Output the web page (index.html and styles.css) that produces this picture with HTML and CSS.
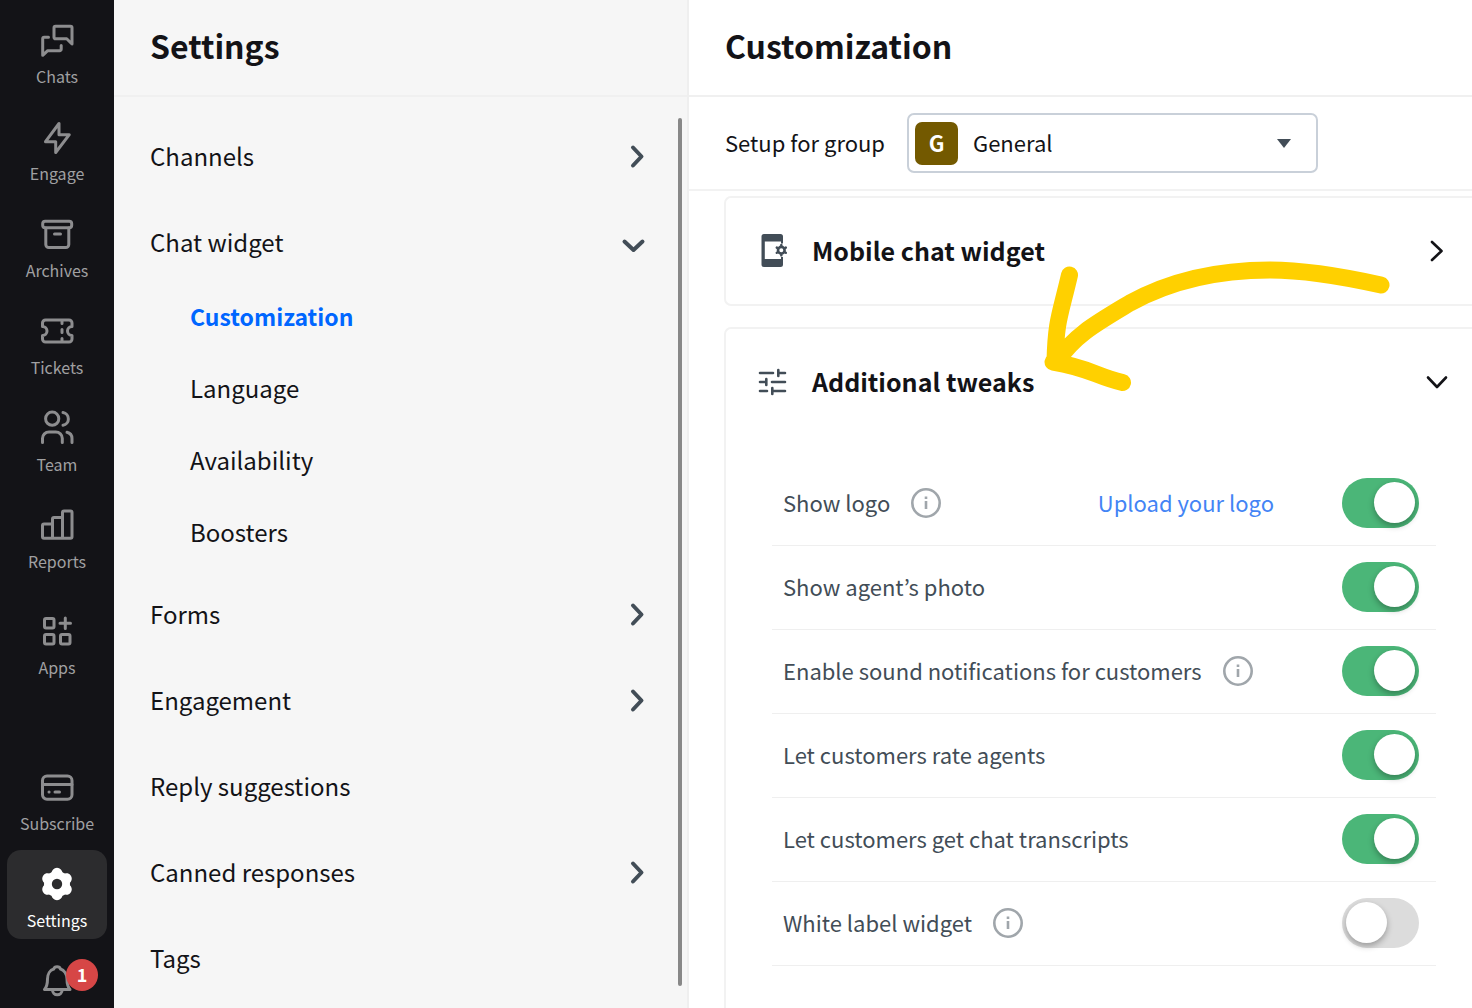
FILE: index.html
```html
<!DOCTYPE html>
<html lang="en">
<head>
    <meta charset="UTF-8">
    <meta name="viewport" content="width=device-width, initial-scale=1.0">
    <title>Settings - Customization</title>
    <link rel="stylesheet" href="styles.css">
</head>
<body>
    <nav class="rail">
        <a href="#" class="rail-item">
            <svg class="icon" viewBox="0 -1 36 36"><path d="M16.5 3.3h15a1.5 1.5 0 0 1 1.5 1.5V21l-5.3-5.2H16.5a1.5 1.5 0 0 1-1.5-1.5V4.8a1.5 1.5 0 0 1 1.500-1.500zM9.500 14.300H5.200a1.500 1.500 0 0 0-1.500 1.500V32.300l5-4.600h12a1.500 1.500 0 0 0 1.500-1.500V22.500"/></svg>
            <span>Chats</span>
        </a>
        <a href="#" class="rail-item">
            <svg class="icon" viewBox="0 -1 36 36"><path d="M20 3.500V14.700H30.300L16.700 32.500V21.700H6.500Z"/></svg>
            <span>Engage</span>
        </a>
        <a href="#" class="rail-item">
            <svg class="icon" viewBox="0 0 36 36"><rect x="3.700" y="5.300" width="29" height="6.500" rx="2.500"/><path d="M6.800 12v16.500a3 3 0 0 0 3 3h17a3 3 0 0 0 3-3V12M15.500 18h6"/></svg>
            <span>Archives</span>
        </a>
        <a href="#" class="rail-item">
            <svg class="icon" viewBox="0 0 36 36"><path d="M6.500 7h23.500a3 3 0 0 1 3 3v3.500a4.500 4.500 0 0 0 0 9V26a3 3 0 0 1-3 3H6.500a3 3 0 0 1-3-3v-3.500a4.500 4.500 0 0 0 0-9V10a3 3 0 0 1 3-3zM23 8v2.500M23 16.500v3M23 25.500v2.500"/></svg>
            <span>Tickets</span>
        </a>
        <a href="#" class="rail-item">
            <svg class="icon" viewBox="0 0 36 36"><circle cx="13.200" cy="8.700" r="6.600"/><path d="M24 2.500a6.500 6.500 0 0 1 0 12.800M3.500 32.500v-4a6.500 6.500 0 0 1 6.500-6.500h6.800a6.500 6.500 0 0 1 6.500 6.500v4M28 22.300a6.500 6.500 0 0 1 5 6.200v4"/></svg>
            <span>Team</span>
        </a>
        <a href="#" class="rail-item">
            <svg class="icon" viewBox="0 0 36 36"><path d="M5 31.300a1.500 1.500 0 0 1-1.500-1.500V18.500A1.500 1.500 0 0 1 5 17h8.500v-5a1.500 1.500 0 0 1 1.500-1.500h8.500V5.500A1.500 1.500 0 0 1 25 4h6.500A1.500 1.500 0 0 1 33 5.500v24.300a1.500 1.500 0 0 1-1.500 1.500zM13.500 17v14M23.500 10.500v20.500"/></svg>
            <span>Reports</span>
        </a>
        <a href="#" class="rail-item rail-apps">
            <svg class="icon" viewBox="0 0 36 36"><rect x="5.500" y="5.500" width="9.500" height="9.500" rx="1.500"/><rect x="5.500" y="21.500" width="9.500" height="9.500" rx="1.500"/><rect x="21.500" y="21.500" width="9.500" height="9.500" rx="1.500"/><path d="M26.300 5v10.500M21 10.200h10.500"/></svg>
            <span>Apps</span>
        </a>
        <a href="#" class="rail-item rail-subscribe">
            <svg class="icon" viewBox="0 0 36 36"><rect x="3.500" y="7" width="29.500" height="23.200" rx="4.500"/><path d="M3.500 15.500H33M10 23h.1M16 23h4.500"/></svg>
            <span>Subscribe</span>
        </a>
        <a href="#" class="rail-item active">
            <svg class="icon gear" viewBox="0 0 36 36"><circle class="gear-body" cx="18" cy="18" r="13"/><path d="M18 7.300v21.400M8.700 12.650l18.600 10.700M8.700 23.350l18.600-10.700"/><circle cx="18" cy="18" r="5.200"/></svg>
            <span>Settings</span>
        </a>
        <a href="#" class="rail-item" aria-label="Notifications">
            <svg class="icon" viewBox="0 0 36 36"><path d="M5.500 26.500h25.500c-2.500-3-3-6-3-10.500 0-5-3-9-6.500-10a3.500 3 0 0 0-6.800 0c-3.500 1-6.200 5-6.200 10 0 4.500-.5 7.500-3 10.500zM13.500 27a4.800 4.800 0 0 0 9.600 0"/></svg>
            <b class="count">1</b>
        </a>
    </nav>

    <aside class="panel">
        <h1 class="title">Settings</h1>
        <ul class="menu">
            <li><a href="#">Channels <svg class="icon" viewBox="0 0 36 36"><path d="M14 9.500l8.500 9-8.500 9"/></svg></a></li>
            <li>
                <a href="#">Chat widget <svg class="icon" viewBox="0 0 36 36"><path d="M5.500 17.500l9 8.500 9-8.500"/></svg></a>
                <ul class="submenu">
                    <li><a href="#" class="current">Customization</a></li>
                    <li><a href="#">Language</a></li>
                    <li><a href="#">Availability</a></li>
                    <li><a href="#">Boosters</a></li>
                </ul>
            </li>
            <li><a href="#">Forms <svg class="icon" viewBox="0 0 36 36"><path d="M14 9.500l8.500 9-8.500 9"/></svg></a></li>
            <li><a href="#">Engagement <svg class="icon" viewBox="0 0 36 36"><path d="M14 9.500l8.500 9-8.500 9"/></svg></a></li>
            <li><a href="#">Reply suggestions</a></li>
            <li><a href="#">Canned responses <svg class="icon" viewBox="0 0 36 36"><path d="M14 9.500l8.500 9-8.500 9"/></svg></a></li>
            <li><a href="#">Tags</a></li>
        </ul>
        <div class="scroll-thumb"></div>
    </aside>

    <main class="content">
        <h1 class="title">Customization</h1>
        <div class="group-bar">
            <label for="group">Setup for group</label>
            <div class="group-select">
                <span class="group-badge">G</span>
                <select id="group">
                    <option>General</option>
                </select>
                <svg class="caret" viewBox="0 0 14 9"><path d="M0 0h14L7 9z"/></svg>
            </div>
        </div>

        <div class="cards">
            <section class="card">
                <button type="button" class="card-head">
                    <svg class="icon filled" viewBox="0 0 36 36"><path fill-rule="evenodd" d="M9 1h16.500a2.500 2.500 0 0 1 2.500 2.500v7h-2V8.500H9.800v17.500H26v-2h2v7.500a2.500 2.500 0 0 1-2.500 2.500H9a2.500 2.500 0 0 1-2.500-2.500v-28A2.500 2.500 0 0 1 9 1z"/><circle cx="26.300" cy="17.200" r="3.300"/><path class="teeth" d="M26.300 12v1M26.300 21.400v1M21.800 14.600l.9.500M29.900 19.300l.9.500M21.800 19.800l.9-.5M29.900 15.100l.9-.5"/></svg>
                    <span>Mobile chat widget</span>
                    <svg class="icon chevron" viewBox="0 0 36 36"><path d="M13 9l9.500 9-9.500 9"/></svg>
                </button>
            </section>

            <section class="card open">
                <button type="button" class="card-head">
                    <svg class="icon" viewBox="0 0 36 36"><path d="M5 9h13M23.300 6v6M24 9h6M5 18h6M11.300 15v6M17 18h13M5 27h7M17.300 24v6M18 27h12"/></svg>
                    <span>Additional tweaks</span>
                    <svg class="icon chevron" viewBox="0 0 36 36"><path d="M9 13.500l9 9.500 9-9.500"/></svg>
                </button>
                <div class="options">
                    <div class="option">
                        <label for="logo">Show logo</label>
                        <svg class="info" viewBox="0 0 30 30"><circle cx="15" cy="15" r="13.700"/><path d="M15 13v8M15 8.500v2.500"/></svg>
                        <a href="#" class="upload">Upload your logo</a>
                        <input type="checkbox" class="switch" id="logo" checked>
                    </div>
                    <div class="option">
                        <label for="photo">Show agent’s photo</label>
                        <input type="checkbox" class="switch" id="photo" checked>
                    </div>
                    <div class="option">
                        <label for="sound">Enable sound notifications for customers</label>
                        <svg class="info" viewBox="0 0 30 30"><circle cx="15" cy="15" r="13.700"/><path d="M15 13v8M15 8.500v2.500"/></svg>
                        <input type="checkbox" class="switch" id="sound" checked>
                    </div>
                    <div class="option">
                        <label for="rate">Let customers rate agents</label>
                        <input type="checkbox" class="switch" id="rate" checked>
                    </div>
                    <div class="option">
                        <label for="transcripts">Let customers get chat transcripts</label>
                        <input type="checkbox" class="switch" id="transcripts" checked>
                    </div>
                    <div class="option">
                        <label for="whitelabel">White label widget</label>
                        <svg class="info" viewBox="0 0 30 30"><circle cx="15" cy="15" r="13.700"/><path d="M15 13v8M15 8.500v2.500"/></svg>
                        <input type="checkbox" class="switch" id="whitelabel">
                    </div>
                </div>
            </section>

            <!-- arrow pointing at the tweaks section -->
            <svg class="arrow" viewBox="1040 260 360 140"><path d="M1381 285C1345 277 1308 270 1270 270C1215 270 1170 281 1130 303C1095 324 1075 335 1057 361M1069.500 275C1060 316 1056 320 1055 361M1053 362C1090 368 1095 376 1122.500 382.500"/></svg>
        </div>
    </main>
</body>
</html>
```

FILE: styles.css
```css
* {
    box-sizing: border-box;
}
body {
    margin: 0;
    display: flex;
    height: 100vh;
    overflow: hidden;
    font-family: "Noto Sans CJK JP", "Noto Sans", sans-serif;
    font-size: 24px;
    color: #131317;
    background-color: #fff;
}
a {
    color: inherit;
    text-decoration: none;
}
ul {
    list-style: none;
    margin: 0;
    padding: 0;
}
.icon {
    width: 36px;
    height: 36px;
    flex: none;
    fill: none;
    stroke: currentColor;
    stroke-width: 3;
    stroke-linecap: round;
    stroke-linejoin: round;
}

/* left rail */
.rail {
    flex: none;
    width: 114px;
    padding: 6px 7px;
    display: flex;
    flex-direction: column;
    gap: 8px;
    background-color: #131317;
    color: #8d8d8f;
    overflow: hidden;
}
.rail-item {
    position: relative;
    flex: none;
    height: 89px;
    padding-top: 16px;
    display: flex;
    flex-direction: column;
    align-items: center;
    gap: 6px;
    border-radius: 14px;
    font-size: 16px;
    line-height: 24px;
}
.rail-item span {
    color: #a0a0a2;
}
.rail-apps {
    margin-top: 9px;
}
.rail-subscribe {
    margin-top: 59px;
}
.rail-item.active {
    background-color: #2c2c2e;
    color: #fff;
}
.rail-item.active span {
    color: #fff;
}
.rail-item .gear {
    stroke-width: 11;
}
.gear circle {
    fill: #2c2c2e;
    stroke: none;
}
.gear .gear-body {
    fill: currentColor;
}
.count {
    position: absolute;
    top: 12px;
    right: 9px;
    width: 32px;
    height: 32px;
    border-radius: 50%;
    background-color: #d64646;
    color: #fff;
    font-size: 18px;
    line-height: 30px;
    text-align: center;
}

/* settings menu */
.panel {
    position: relative;
    flex: none;
    width: 575px;
    background-color: #f6f6f6;
    border-right: 2px solid #efefef;
}
.title {
    margin: 0;
    height: 97px;
    padding: 0 36px;
    border-bottom: 2px solid #f0f0f0;
    font-size: 32px;
    font-weight: 700;
    line-height: 90px;
}
.menu {
    padding: 20px 32px 0 36px;
    display: flex;
    flex-direction: column;
    gap: 8px;
}
.menu a {
    display: flex;
    justify-content: space-between;
    align-items: center;
    height: 78px;
    padding-bottom: 1px;
}
.menu .icon {
    color: #424d57;
    stroke-width: 4;
}
.submenu {
    padding-left: 40px;
    margin: -1px 0;
}
.submenu a {
    height: 72px;
}
.menu .current {
    color: #0066ff;
    font-size: 23px;
    font-weight: 700;
}
.scroll-thumb {
    position: absolute;
    top: 118px;
    bottom: 22px;
    right: 5px;
    width: 4px;
    border-radius: 2px;
    background-color: #888;
}

/* main content */
.content {
    flex: 1;
    min-width: 0;
    display: flex;
    flex-direction: column;
}
.group-bar {
    height: 94px;
    padding: 0 36px;
    display: flex;
    align-items: center;
    gap: 22px;
    border-bottom: 2px solid #f2f2f2;
    font-size: 22px;
}
.group-bar label {
    padding-bottom: 2px;
}
.group-select {
    position: relative;
}
.group-select select {
    appearance: none;
    width: 411px;
    height: 60px;
    padding: 0 64px 2px;
    border: 2px solid #c9d0d9;
    border-radius: 7px;
    background-color: #fff;
    color: inherit;
    font: inherit;
}
.group-badge {
    position: absolute;
    top: 9px;
    left: 8px;
    width: 43px;
    height: 43px;
    border-radius: 7px;
    background-color: #735900;
    color: #fff;
    font-weight: 700;
    line-height: 40px;
    text-align: center;
}
.caret {
    position: absolute;
    top: 26px;
    right: 27px;
    width: 14px;
    height: 9px;
    fill: #424d57;
}
.cards {
    position: relative;
    flex: 1;
    padding: 5px 0 0 35px;
    display: flex;
    flex-direction: column;
    gap: 21px;
}
.card {
    border: 2px solid #f2f2f2;
    border-right: none;
    border-radius: 7px 0 0 7px;
}
.card.open {
    flex: 1;
    border-bottom: none;
    border-bottom-left-radius: 0;
}
.card-head {
    width: 100%;
    height: 106px;
    padding: 0 17px 0 29px;
    display: flex;
    align-items: center;
    gap: 21px;
    border: none;
    background: none;
    color: #131317;
    font: inherit;
    font-size: 25px;
    font-weight: 700;
}
.card-head span {
    padding-bottom: 2px;
}
.card-head .icon {
    color: #424d57;
    stroke-width: 2.6;
}
.card-head .chevron {
    margin-left: auto;
    color: #131317;
}
.filled path {
    fill: currentColor;
    stroke: none;
}
.filled .teeth {
    stroke: currentColor;
    stroke-width: 2.4;
}
.options {
    padding: 27px 36px 0 46px;
}
.option {
    height: 84px;
    padding: 0 17px 1px 11px;
    display: flex;
    align-items: center;
    border-bottom: 1px solid #efefef;
    color: #424d57;
    font-size: 22px;
}
.option label,
.upload {
    padding-bottom: 2px;
}
.info {
    flex: none;
    width: 30px;
    height: 30px;
    margin-left: 21px;
    fill: none;
    stroke: #a0a6ab;
    stroke-width: 2.6;
}
.upload {
    margin-left: auto;
    margin-right: 68px;
    color: #4384f5;
}
.switch {
    appearance: none;
    flex: none;
    width: 77px;
    height: 50px;
    margin: 0 0 0 auto;
    padding: 4px;
    border-radius: 25px;
    background-color: #dcdcdc;
}
.upload + .switch {
    margin-left: 0;
}
.switch::before {
    content: "";
    display: block;
    width: 41px;
    height: 41px;
    border-radius: 50%;
    background-color: #fff;
    box-shadow: 0 3px 6px rgba(0, 0, 0, 0.3);
}
.switch:checked {
    background-color: #4bb678;
}
.switch:checked::before {
    margin-left: 28px;
}
.arrow {
    position: absolute;
    top: 69px;
    left: 351px;
    width: 360px;
    height: 140px;
    fill: none;
    stroke: #ffd000;
    stroke-width: 17;
    stroke-linecap: round;
    stroke-linejoin: round;
    pointer-events: none;
}
```
